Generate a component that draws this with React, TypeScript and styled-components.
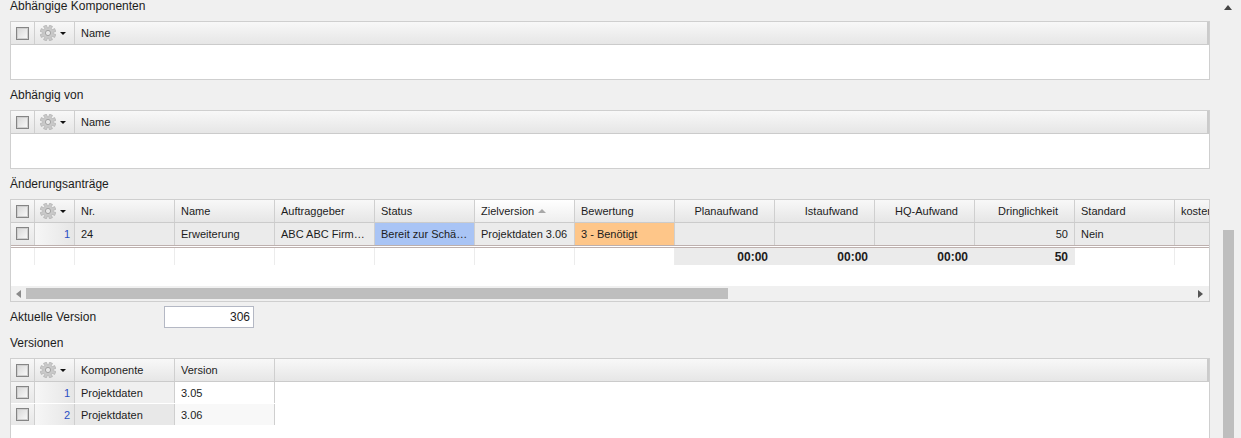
import React from 'react'
import styled, { createGlobalStyle } from 'styled-components'

const GlobalStyle = createGlobalStyle`
  html, body {
    margin: 0;
    padding: 0;
    height: 438px;
    overflow: hidden;
    background: #f0f0f0;
  }
`

const Page = styled.div`
  display: flex;
  width: 1241px;
  height: 438px;
  overflow: hidden;
  background: #f0f0f0;
  color: #1c1c1c;
  font-family: 'Liberation Sans', Arial, sans-serif;
`

const Content = styled.div`
  width: 1200px;
  margin-left: 10px;
  display: flex;
  flex-direction: column;
  flex: none;
`

const Scrollbar = styled.div`
  width: 31px;
  flex: none;
  display: flex;
  flex-direction: column;
  align-items: flex-end;
  padding-right: 7px;
  box-sizing: border-box;
`

const UpArrow = styled.div`
  width: 0;
  height: 0;
  margin: 5px 2px 0 0;
  border-left: 4px solid transparent;
  border-right: 4px solid transparent;
  border-bottom: 5px solid #444;
`

const Thumb = styled.div`
  width: 11px;
  height: 208px;
  margin-top: 220px;
  background: #bebebe;
`

const Title = styled.div<{ $top: number; $bottom: number }>`
  font-size: 12px;
  line-height: 14px;
  margin-top: ${(p) => p.$top}px;
  margin-bottom: ${(p) => p.$bottom}px;
`

const Grid = styled.div<{ $h: number }>`
  height: ${(p) => p.$h}px;
  box-sizing: border-box;
  border: 1px solid #cfcfcf;
  background: #fff;
  display: flex;
  flex-direction: column;
  overflow: hidden;
  flex: none;
`

const Header = styled.div`
  display: flex;
  height: 23px;
  flex: none;
  box-sizing: border-box;
  border-bottom: 1px solid #cbcbcb;
  background: linear-gradient(#f8f8f8, #e6e6e6);
  font-size: 11px;
`

const HeadCell = styled.div<{ $w?: number; $right?: boolean; $fill?: boolean; $sorted?: boolean }>`
  ${(p) => (p.$fill ? 'flex: 1;' : `width: ${p.$w}px; flex: none;`)}
  box-sizing: border-box;
  display: flex;
  align-items: center;
  justify-content: ${(p) => (p.$right ? 'flex-end' : 'flex-start')};
  padding: ${(p) => (p.$right ? '0 16px 0 0' : '0 0 0 6px')};
  border-right: ${(p) => (p.$fill ? '2px solid #cbcbcb' : '1px solid #cfcfcf')};
  white-space: nowrap;
  overflow: hidden;
  ${(p) => (p.$sorted ? 'background: linear-gradient(#ffffff, #eeeeee);' : '')}
`

const CheckCol = styled.div<{ $head?: boolean }>`
  width: 24px;
  flex: none;
  box-sizing: border-box;
  display: flex;
  align-items: ${(p) => (p.$head ? 'center' : 'flex-start')};
  padding-top: ${(p) => (p.$head ? 0 : 4)}px;
  justify-content: center;
  border-right: 1px solid #cfcfcf;
  background: ${(p) => (p.$head ? 'transparent' : 'linear-gradient(#f4f4f4, #e8e8e8)')};
`

const GearCol = styled.div`
  width: 40px;
  flex: none;
  box-sizing: border-box;
  display: flex;
  align-items: center;
  padding-left: 5px;
  gap: 4px;
  border-right: 1px solid #cfcfcf;
`

const Caret = styled.span`
  width: 0;
  height: 0;
  border-left: 3px solid transparent;
  border-right: 3px solid transparent;
  border-top: 3px solid #111;
`

const Check = styled.span`
  width: 13px;
  height: 13px;
  box-sizing: border-box;
  border: 1px solid #858585;
  box-shadow: inset 0 0 0 1px #cfcfcf;
  background: linear-gradient(135deg, #d6d6d6, #fbfbfb);
  display: block;
`

const SortUp = styled.span`
  width: 0;
  height: 0;
  margin-left: 4px;
  border-left: 4px solid transparent;
  border-right: 4px solid transparent;
  border-bottom: 4px solid #a8a8a8;
`

const Row = styled.div<{ $h: number; $line?: boolean }>`
  display: flex;
  height: ${(p) => p.$h}px;
  box-sizing: border-box;
  flex: none;
  font-size: 11px;
  ${(p) => (p.$line ? 'border-bottom: 1px solid #fff;' : '')}
`

const RowNum = styled.div`
  width: 40px;
  flex: none;
  box-sizing: border-box;
  text-align: right;
  padding: 4px 4px 0 0;
  line-height: 14px;
  color: #2a4fc4;
  border-right: 1px solid #cfcfcf;
  background: linear-gradient(90deg, #f6f6f6, #e6e6e6);
`

const Cell = styled.div<{ $bg?: string; $right?: boolean }>`
  width: 100px;
  flex: none;
  box-sizing: border-box;
  padding: 0 6px;
  line-height: 22px;
  white-space: nowrap;
  overflow: hidden;
  text-overflow: ellipsis;
  background: ${(p) => p.$bg ?? 'transparent'};
  text-align: ${(p) => (p.$right ? 'right' : 'left')};
  font-size: 11px;
  border-right: 1px solid #cfcfcf;
`

const SummaryLine = styled.div`
  height: 1px;
  flex: none;
  box-sizing: content-box;
  border-top: 1px solid #bdb0ae;
  border-bottom: 1px solid #bdb0ae;
  background: #fff;
  width: 1300px;
`

const SpacerCol = styled.div<{ $w: number }>`
  width: ${(p) => p.$w}px;
  flex: none;
  box-sizing: border-box;
  border-right: 1px solid #ececec;
`

const FootCell = styled.div`
  width: 100px;
  flex: none;
  box-sizing: border-box;
  padding-right: 7px;
  background: #ebebeb;
  text-align: right;
  font-weight: 700;
  font-size: 12px;
  line-height: 18px;
`

const Fill = styled.div`
  flex: 1;
`

const HBar = styled.div`
  height: 15px;
  flex: none;
  display: flex;
  align-items: center;
  background: #f0f0f0;
  padding: 0 6px 0 5px;
`

const ArrowLeft = styled.span`
  width: 0;
  height: 0;
  border-top: 4px solid transparent;
  border-bottom: 4px solid transparent;
  border-right: 5px solid #8a8a8a;
`

const ArrowRight = styled.span`
  width: 0;
  height: 0;
  margin-left: auto;
  border-top: 4px solid transparent;
  border-bottom: 4px solid transparent;
  border-left: 5px solid #555;
`

const HThumb = styled.div`
  width: 702px;
  height: 11px;
  margin-left: 5px;
  background: #bebebe;
`

const FormRow = styled.div`
  display: flex;
  align-items: center;
  height: 22px;
  margin-top: 4px;
  font-size: 12px;
  flex: none;
`

const FormLabel = styled.label`
  width: 154px;
  flex: none;
`

const ValueInput = styled.div`
  width: 90px;
  height: 22px;
  box-sizing: border-box;
  border: 1px solid #b4b8c4;
  background: #fff;
  text-align: right;
  padding-right: 3px;
  line-height: 20px;
`

// 8 blocky teeth around the centre of a 16 box
const gearPath = (() => {
  const pts: string[] = []
  for (let i = 0; i < 8; i++) {
    const a = (i * Math.PI) / 4 + Math.PI / 8
    const outer = [-0.2, 0.2].map((d) => [8 + 8 * Math.cos(a + d), 8 + 8 * Math.sin(a + d)])
    const inner = [-0.27, 0.27].map((d) => [8 + 5.3 * Math.cos(a + d), 8 + 5.3 * Math.sin(a + d)])
    ;[inner[0], outer[0], outer[1], inner[1]].forEach((p) => pts.push(`${p[0].toFixed(2)} ${p[1].toFixed(2)}`))
  }
  return `M${pts.join('L')}Z`
})()

const Gear = () => (
  <svg width="16" height="16" viewBox="0 0 16 16">
    <path d={gearPath} fill="#c9c9c9" stroke="#a9a9a9" strokeWidth="0.6" strokeLinejoin="round" />
    <circle cx="8" cy="8" r="2.6" fill="#e8e8e8" stroke="#a2a2a2" strokeWidth="1" />
  </svg>
)

const SelectHead = () => (
  <>
    <CheckCol $head>
      <Check />
    </CheckCol>
    <GearCol>
      <Gear />
      <Caret />
    </GearCol>
  </>
)

const changeColumns = [
  { label: 'Nr.' },
  { label: 'Name' },
  { label: 'Auftraggeber' },
  { label: 'Status' },
  { label: 'Zielversion', sorted: true },
  { label: 'Bewertung' },
  { label: 'Planaufwand', right: true },
  { label: 'Istaufwand', right: true },
  { label: 'HQ-Aufwand', right: true },
  { label: 'Dringlichkeit', right: true },
  { label: 'Standard' },
  { label: 'kosten' }
]

const GREY = '#ebebeb'

const EmptyGrid = () => (
  <Grid $h={59}>
    <Header>
      <SelectHead />
      <HeadCell $fill>Name</HeadCell>
    </Header>
  </Grid>
)

const App = () => {
  return (
    <Page>
      <GlobalStyle />
      <Content>
        <Title $top={-1} $bottom={8}>Abhängige Komponenten</Title>
        <EmptyGrid />
        <Title $top={8} $bottom={8}>Abhängig von</Title>
        <EmptyGrid />
        <Title $top={8} $bottom={8}>Änderungsanträge</Title>

        <Grid $h={103}>
          <Header>
            <SelectHead />
            {changeColumns.map((c) => (
              <HeadCell key={c.label} $w={100} $right={c.right} $sorted={c.sorted}>
                {c.label}
                {c.sorted && <SortUp />}
              </HeadCell>
            ))}
          </Header>
          <Row $h={22}>
            <CheckCol>
              <Check />
            </CheckCol>
            <RowNum>1</RowNum>
            <Cell $bg={GREY}>24</Cell>
            <Cell $bg={GREY}>Erweiterung</Cell>
            <Cell $bg={GREY}>ABC ABC Firma GmbH</Cell>
            <Cell $bg="#a9c4f5">Bereit zur Schätzung</Cell>
            <Cell $bg={GREY}>Projektdaten 3.06</Cell>
            <Cell $bg="#fec689">3 - Benötigt</Cell>
            <Cell $bg={GREY} />
            <Cell $bg={GREY} />
            <Cell $bg={GREY} />
            <Cell $bg={GREY} $right>50</Cell>
            <Cell $bg={GREY}>Nein</Cell>
            <Cell $bg={GREY} />
          </Row>
          <SummaryLine />
          <Row $h={17}>
            <SpacerCol $w={24} />
            <SpacerCol $w={40} />
            <SpacerCol $w={100} />
            <SpacerCol $w={100} />
            <SpacerCol $w={100} />
            <SpacerCol $w={100} />
            <SpacerCol $w={100} />
            <SpacerCol $w={100} />
            <FootCell>00:00</FootCell>
            <FootCell>00:00</FootCell>
            <FootCell>00:00</FootCell>
            <FootCell>50</FootCell>
            <SpacerCol $w={100} />
            <SpacerCol $w={100} />
          </Row>
          <Fill />
          <HBar>
            <ArrowLeft />
            <HThumb />
            <ArrowRight />
          </HBar>
        </Grid>

        <FormRow>
          <FormLabel>Aktuelle Version</FormLabel>
          <ValueInput>306</ValueInput>
        </FormRow>
        <Title $top={8} $bottom={8}>Versionen</Title>

        <Grid $h={90}>
          <Header>
            <SelectHead />
            <HeadCell $w={100}>Komponente</HeadCell>
            <HeadCell $w={100}>Version</HeadCell>
            <HeadCell $fill />
          </Header>
          <Row $h={22} $line>
            <CheckCol>
              <Check />
            </CheckCol>
            <RowNum>1</RowNum>
            <Cell $bg="#f0f0f0">Projektdaten</Cell>
            <Cell $bg="#fff">3.05</Cell>
          </Row>
          <Row $h={22} $line>
            <CheckCol>
              <Check />
            </CheckCol>
            <RowNum>2</RowNum>
            <Cell $bg="#e8e8e8">Projektdaten</Cell>
            <Cell $bg="#f8f8f8">3.06</Cell>
          </Row>
        </Grid>
      </Content>
      <Scrollbar>
        <UpArrow />
        <Thumb />
      </Scrollbar>
    </Page>
  )
}

export default App
